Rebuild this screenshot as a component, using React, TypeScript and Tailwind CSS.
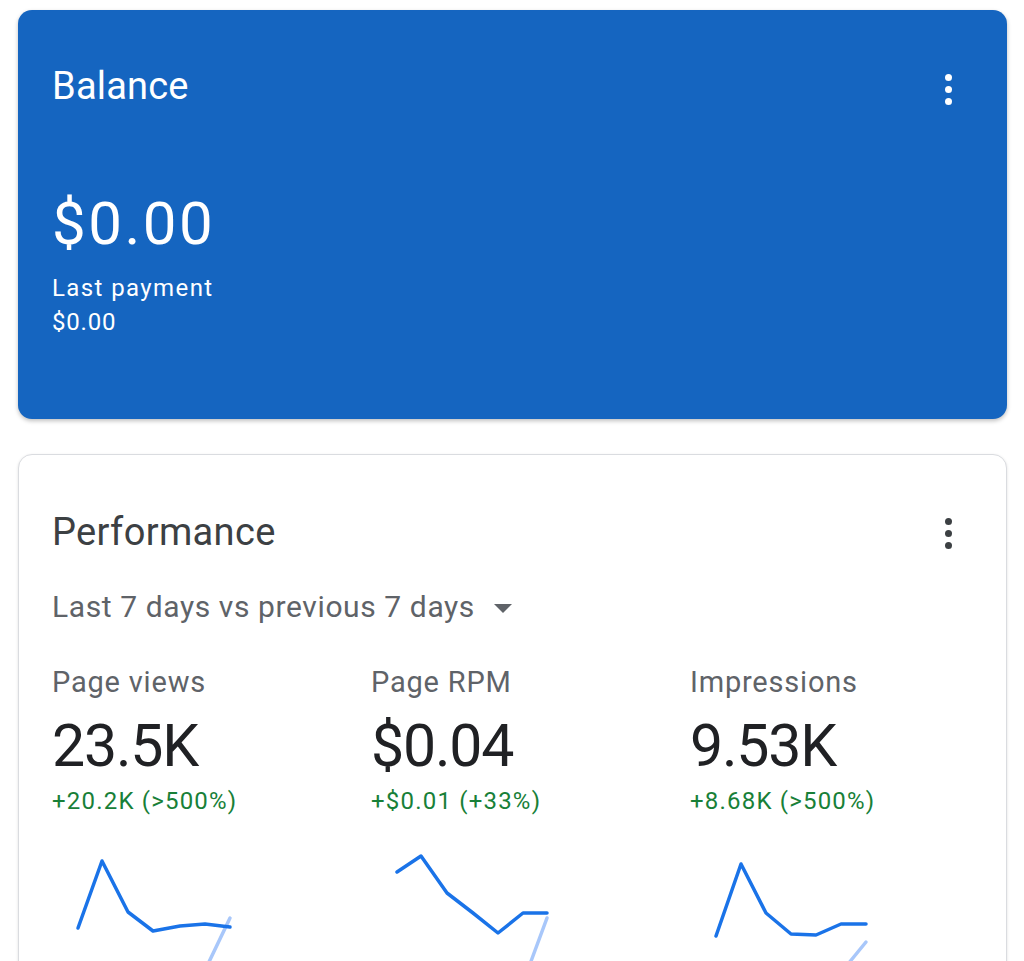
import React from 'react';

type Metric = {
  label: string;
  value: string;
  change: string;
  line: [number, number][];
  ghost: [number, number][];
};

const metrics: Metric[] = [
  {
    label: 'Page views',
    value: '23.5K',
    change: '+20.2K (>500%)',
    line: [[26, 82], [50, 15], [76, 66], [101, 85], [128, 80], [153, 78], [178, 81]],
    ghost: [[156, 118], [178, 72]],
  },
  {
    label: 'Page RPM',
    value: '$0.04',
    change: '+$0.01 (+33%)',
    line: [[26, 26], [50, 10], [76, 47], [102, 67], [127, 87], [152, 67], [176, 67]],
    ghost: [[159, 118], [176, 72]],
  },
  {
    label: 'Impressions',
    value: '9.53K',
    change: '+8.68K (>500%)',
    line: [[26, 90], [51, 18], [76, 67], [101, 88], [126, 89], [151, 78], [176, 78]],
    ghost: [[158, 118], [176, 96]],
  },
];

const Dots = ({ color }: { color: string }) => (
  <div className="flex flex-col items-center gap-[5px] px-2 py-1">
    <span className={`block h-[7px] w-[7px] rounded-full ${color}`} />
    <span className={`block h-[7px] w-[7px] rounded-full ${color}`} />
    <span className={`block h-[7px] w-[7px] rounded-full ${color}`} />
  </div>
);

const Sparkline = ({ line, ghost }: { line: [number, number][]; ghost: [number, number][] }) => (
  <svg width="200" height="130" viewBox="0 0 200 130" className="block">
    <polyline
      points={ghost.map((p) => p.join(',')).join(' ')}
      fill="none"
      stroke="#a8c7fa"
      strokeWidth="3.5"
      strokeLinecap="round"
    />
    <polyline
      points={line.map((p) => p.join(',')).join(' ')}
      fill="none"
      stroke="#1a73e8"
      strokeWidth="3.5"
      strokeLinejoin="round"
      strokeLinecap="round"
    />
  </svg>
);

const App = () => {
  return (
    <main className="min-h-screen bg-white pl-[18px] pr-[17px] pt-[10px] font-['Roboto',sans-serif]">
      <section className="h-[409px] rounded-[14px] bg-[#1565c0] pl-[34px] pr-[47px] pt-[53px] text-white shadow-[0_2px_4px_rgba(0,0,0,0.25)]">
        <div className="flex items-start justify-between">
          <h2 className="text-[38px] leading-[46px] tracking-[0.2px]">Balance</h2>
          <div className="mt-[7px]">
            <Dots color="bg-white" />
          </div>
        </div>
        <p className="mt-[85px] text-[60px] leading-[60px] tracking-[2.5px]">$0.00</p>
        <p className="mt-[17px] text-[24px] leading-[34px] tracking-[1.4px]">Last payment</p>
        <p className="text-[24px] leading-[34px] tracking-[0.8px]">$0.00</p>
      </section>

      <section className="mt-[35px] rounded-[14px] border border-[#dadce0] bg-white pl-[33px] pr-[46px] pt-[54px] pb-10 shadow-[0_1px_3px_rgba(0,0,0,0.12)]">
        <div className="flex items-start justify-between">
          <h2 className="text-[38px] leading-[46px] tracking-[0.35px] text-[#3c4043]">Performance</h2>
          <div className="mt-[5px]">
            <Dots color="bg-[#3c4043]" />
          </div>
        </div>

        <button className="mt-[34px] flex items-center gap-[19px] text-[30px] leading-[36px] tracking-[0.6px] text-[#5f6368]">
          <span>Last 7 days vs previous 7 days</span>
          <svg width="18" height="9" viewBox="0 0 18 9" className="mt-[2px]">
            <polygon points="0,0 18,0 9,9" fill="#5f6368" />
          </svg>
        </button>

        <div className="mt-[39px] grid grid-cols-[319px_319px_1fr]">
          {metrics.map((m) => (
            <div key={m.label} className="flex flex-col">
              <span className="text-[29px] leading-[36px] tracking-[0.8px] text-[#5f6368]">{m.label}</span>
              <span className="mt-[14px] text-[59px] leading-[64px] tracking-[-1.2px] text-[#202124]">{m.value}</span>
              <span className="mt-[7px] text-[24px] leading-[32px] tracking-[1.2px] text-[#188038]">{m.change}</span>
              <div className="mt-[29px]">
                <Sparkline line={m.line} ghost={m.ghost} />
              </div>
            </div>
          ))}
        </div>
      </section>
    </main>
  );
};

export default App;
